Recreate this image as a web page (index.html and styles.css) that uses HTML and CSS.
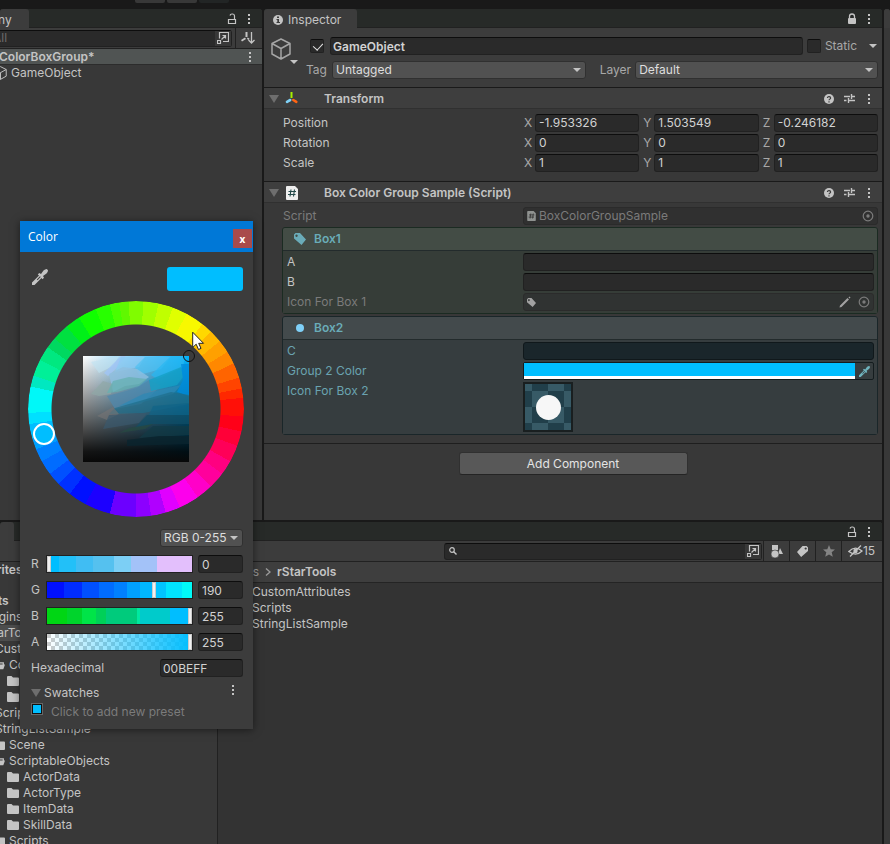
FILE: index.html
```html
<!DOCTYPE html>
<html lang="en">

<head>
  <meta charset="UTF-8" />
  <meta name="viewport" content="width=device-width, initial-scale=1.0" />
  <title>Inspector</title>
  <link rel="stylesheet" href="styles.css">
</head>

<body>
  <svg class="sprite" aria-hidden="true">
    <symbol id="kebab" viewBox="0 0 4 12">
      <path d="M1 1h2v2H1zM1 5h2v2H1zM1 9h2v2H1z" fill="currentColor" />
    </symbol>
    <symbol id="unlock" viewBox="0 0 10 12">
      <path d="M1.5 6.5h7v4h-7zM7.5 6V3a2 2 0 0 0-2-2H5a2 2 0 0 0-2 1.5" fill="none" stroke="currentColor" stroke-width="1.2" />
    </symbol>
    <symbol id="lock" viewBox="0 0 10 12">
      <path d="M2.5 6V3.5a2.5 2.5 0 0 1 5 0V6" fill="none" stroke="currentColor" stroke-width="1.3" />
      <rect x="1" y="5" width="8" height="6" rx="1" fill="currentColor" />
    </symbol>
    <symbol id="popout" viewBox="0 0 12 12">
      <path d="M2.5 6.5V.5h9v9H6M.5 8.5h3v3h-3zM4.5 7.5l4-4M5.500 3.500h3v3" fill="none" stroke="currentColor" stroke-width="1.2" />
    </symbol>
    <symbol id="cube" viewBox="0 0 20 22">
      <path d="M10 1l9 4.500v10.500L10 21 1 16V5.500zM1 5.500l9 5 9-5M10 10.500V21" fill="none" stroke="currentColor" stroke-width="1.500" stroke-linejoin="round" />
    </symbol>
    <symbol id="folder" viewBox="0 0 12 10">
      <path d="M0 1a1 1 0 0 1 1-1h3.500l1.500 1.500h5a1 1 0 0 1 1 1V9a1 1 0 0 1-1 1H1a1 1 0 0 1-1-1z" fill="currentColor" />
    </symbol>
    <symbol id="folder-open" viewBox="0 0 14 10">
      <path d="M1 9V1h4l1.500 1.500H12V5" fill="none" stroke="currentColor" stroke-width="1.500" />
      <path d="M3.500 4.500H14L12 10H1z" fill="currentColor" />
    </symbol>
    <symbol id="help" viewBox="0 0 10 10">
      <circle cx="5" cy="5" r="5" fill="currentColor" />
      <path d="M3.400 4a1.600 1.400 0 1 1 2.300 1.200Q5 5.500 5 6.300M5 7.200v1.200" fill="none" stroke="#3e3e3e" stroke-width="1.200" />
    </symbol>
    <symbol id="preset" viewBox="0 0 11 11">
      <path d="M0 3.500h6M8 3.500h3M7.500 1v5M0 7.500h2.500M4.500 7.500H11M4.500 5v5" fill="none" stroke="currentColor" stroke-width="1.400" />
    </symbol>
    <symbol id="tag" viewBox="0 0 12 12">
      <path fill-rule="evenodd" d="M0 1.500L1.500 0H6l6 6.500L7.500 12 0 5.500zM2.500 1.500a1.200 1.200 0 1 0 .1 0z" fill="currentColor" />
    </symbol>
    <symbol id="target" viewBox="0 0 12 12">
      <circle cx="6" cy="6" r="4.800" fill="none" stroke="currentColor" stroke-width="1.200" />
      <circle cx="6" cy="6" r="1.700" fill="currentColor" />
    </symbol>
    <symbol id="pencil" viewBox="0 0 12 12">
      <path d="M.5 11.500l.5-2L8.500 2l1.500 1.500L2.500 11zM9.500 1.500l1-1 1 1-1 1z" fill="currentColor" />
    </symbol>
    <symbol id="dropper" viewBox="0 0 16 16">
      <path fill-rule="evenodd" d="M0 16v-2.500L7 6.500 5.800 5.500 7.200 4l1.800 1 2.500-3.500Q13 0 14.800 0L16 1.200Q16 3 14.500 4.500L11 7l1 1.800L10.500 10.200 9.500 9 2.500 16zM5.500 11.200L8.700 8 8 7.300 4.800 10.500z" fill="currentColor" />
    </symbol>
    <symbol id="script" viewBox="0 0 12 14">
      <path d="M0 1a1 1 0 0 1 1-1h8l3 3v10a1 1 0 0 1-1 1H1a1 1 0 0 1-1-1z" fill="currentColor" />
      <path d="M5 3.500l-1 7M8.500 3.500l-1 7M2.500 5.500h7.500M2 8.500h7.500" stroke="var(--hash)" stroke-width="1.100" />
    </symbol>
  </svg>

  <div class="topbar"><span></span><span></span><span></span></div>

  <main class="editor">
    <section class="panel hierarchy">
      <div class="tabbar">
        <div class="tab">ny</div>
        <div class="tab-tools">
          <svg class="i-lock"><use href="#unlock" /></svg>
          <svg class="i-kebab"><use href="#kebab" /></svg>
        </div>
      </div>
      <div class="toolbar">
        <div class="search">
          <input type="text" placeholder="All" aria-label="Search hierarchy" />
          <button class="search-open" aria-label="Open search"><svg class="i12"><use href="#popout" /></svg></button>
        </div>
        <button class="tool sort" aria-label="Sort">
          <svg width="14" height="12" viewBox="0 0 14 12">
            <path d="M10.500 0v11M7.500 8l3 3 3-3" fill="none" stroke="currentColor" stroke-width="1.300" />
            <path d="M4.500 0h2v5h-2zM0 8l4-2.500 1 1.500-4 2.500zM6.500 5.500l2 1-.7 1.500L6 7z" fill="currentColor" />
          </svg>
        </button>
      </div>
      <div class="scene-row"><b>ColorBoxGroup*</b><svg class="i-kebab"><use href="#kebab" /></svg></div>
      <div class="object-row"><svg class="i-cube-s"><use href="#cube" /></svg>GameObject</div>
    </section>

    <section class="panel inspector">
      <div class="tabbar">
        <div class="tab">
          <svg width="10" height="10" viewBox="0 0 10 10">
            <circle cx="5" cy="5" r="5" fill="currentColor" />
            <path d="M4 1.500h2v1.500H4zM3.500 4H6v3h1v1H3.500V7h.8V5h-.8z" fill="#3c3c3c" />
          </svg>
          Inspector
        </div>
        <div class="tab-tools">
          <svg class="i-lock"><use href="#lock" /></svg>
          <svg class="i-kebab"><use href="#kebab" /></svg>
        </div>
      </div>

      <div class="object-header">
        <div class="object-icon">
          <svg class="i-cube"><use href="#cube" /></svg>
          <i class="arrow"></i>
        </div>
        <div class="object-fields">
          <div class="object-line">
            <input type="checkbox" checked aria-label="Active" />
            <input class="field name" type="text" value="GameObject" aria-label="Name" />
            <input type="checkbox" id="static" />
            <label for="static">Static</label>
            <i class="arrow static-arrow"></i>
          </div>
          <div class="object-line">
            <label class="tag-label" for="tag-select">Tag</label>
            <span class="dropdown tag-drop"><select id="tag-select"><option>Untagged</option></select></span>
            <label class="layer-label" for="layer-select">Layer</label>
            <span class="dropdown layer-drop"><select id="layer-select"><option>Default</option></select></span>
          </div>
        </div>
      </div>

      <div class="component-header">
        <i class="fold"></i>
        <svg class="component-icon" width="14" height="14" viewBox="0 0 14 14">
          <path d="M5.500 0h2v6h-2z" fill="#a5f000" />
          <path d="M5.200 8L2 9.800" stroke="#7fd0f5" stroke-width="2.600" stroke-linecap="round" />
          <path d="M8.300 8l3 1.800" stroke="#ff6413" stroke-width="2.600" stroke-linecap="round" />
        </svg>
        <h2>Transform</h2>
        <div class="component-tools">
          <svg class="i-help"><use href="#help" /></svg>
          <svg class="i-preset"><use href="#preset" /></svg>
          <svg class="i-kebab"><use href="#kebab" /></svg>
        </div>
      </div>
      <div class="rows transform">
        <div class="row">
          <span>Position</span>
          <div class="vector">
            <label>X<input class="field" type="text" value="-1.953326" /></label>
            <label>Y<input class="field" type="text" value="1.503549" /></label>
            <label>Z<input class="field" type="text" value="-0.246182" /></label>
          </div>
        </div>
        <div class="row">
          <span>Rotation</span>
          <div class="vector">
            <label>X<input class="field" type="text" value="0" /></label>
            <label>Y<input class="field" type="text" value="0" /></label>
            <label>Z<input class="field" type="text" value="0" /></label>
          </div>
        </div>
        <div class="row">
          <span>Scale</span>
          <div class="vector">
            <label>X<input class="field" type="text" value="1" /></label>
            <label>Y<input class="field" type="text" value="1" /></label>
            <label>Z<input class="field" type="text" value="1" /></label>
          </div>
        </div>
      </div>

      <div class="component-header">
        <i class="fold"></i>
        <svg class="component-icon script-icon" width="12" height="14"><use href="#script" /></svg>
        <h2>Box Color Group Sample (Script)</h2>
        <div class="component-tools">
          <svg class="i-help"><use href="#help" /></svg>
          <svg class="i-preset"><use href="#preset" /></svg>
          <svg class="i-kebab"><use href="#kebab" /></svg>
        </div>
      </div>
      <div class="rows script">
        <div class="row disabled">
          <span>Script</span>
          <div class="object-field">
            <svg class="i-script"><use href="#script" /></svg>
            <span>BoxColorGroupSample</span>
            <svg class="i12 pick"><use href="#target" /></svg>
          </div>
        </div>

        <div class="box box-green">
          <h3><svg class="i12"><use href="#tag" /></svg>Box1</h3>
          <div class="box-body">
            <div class="row"><label for="a">A</label><input class="field" id="a" type="text" /></div>
            <div class="row"><label for="b">B</label><input class="field" id="b" type="text" /></div>
            <div class="row disabled">
              <span>Icon For Box 1</span>
              <div class="object-field">
                <svg class="i-tag-s"><use href="#tag" /></svg>
                <svg class="i12 pick edit"><use href="#pencil" /></svg>
                <svg class="i12"><use href="#target" /></svg>
              </div>
            </div>
          </div>
        </div>

        <div class="box box-blue">
          <h3><i class="dot"></i>Box2</h3>
          <div class="box-body">
            <div class="row"><label for="c">C</label><input class="field" id="c" type="text" /></div>
            <div class="row">
              <label for="group-color">Group 2 Color</label>
              <div class="color-field">
                <input id="group-color" type="color" value="#00beff" />
                <button aria-label="Pick color"><svg width="11" height="11"><use href="#dropper" /></svg></button>
              </div>
            </div>
            <div class="row"><span>Icon For Box 2</span><div class="preview"><i></i></div></div>
          </div>
        </div>
      </div>

      <div class="add-row"><button class="add">Add Component</button></div>
    </section>

    <section class="panel project">
      <div class="tabbar">
        <div class="tab"></div>
        <div class="tab-tools">
          <svg class="i-lock"><use href="#unlock" /></svg>
          <svg class="i-kebab"><use href="#kebab" /></svg>
        </div>
      </div>
      <div class="toolbar">
        <div class="search">
          <svg class="lens" width="8" height="8" viewBox="0 0 8 8"><circle cx="3" cy="3" r="2.300" fill="none" stroke="currentColor" stroke-width="1.200" /><path d="M4.700 4.700L7.500 7.500" stroke="currentColor" stroke-width="1.400" /></svg>
          <input type="text" aria-label="Search project" />
          <button class="search-open" aria-label="Open search"><svg class="i12"><use href="#popout" /></svg></button>
        </div>
        <button class="tool" aria-label="Search by type">
          <svg width="12" height="13" viewBox="0 0 12 13"><path d="M1 0h6v5H1zM9 3l3 6H7z" fill="currentColor" /><circle cx="4" cy="9" r="4" fill="currentColor" stroke="#3c3c3c" stroke-width=".6" /></svg>
        </button>
        <button class="tool" aria-label="Search by label"><svg class="i-label"><use href="#tag" /></svg></button>
        <button class="tool dim" aria-label="Favorite">
          <svg width="12" height="12" viewBox="0 0 12 12"><path d="M6 0l1.700 4.200 4.300.3-3.300 2.800 1.100 4.500L6 9.400l-3.800 2.400 1.100-4.500L0 4.500l4.300-.3z" fill="currentColor" /></svg>
        </button>
        <button class="tool hidden-count">
          <svg width="15" height="12" viewBox="0 0 15 12"><path d="M.8 6.500Q7 0 14 6Q8 12 .8 6.500z" fill="none" stroke="currentColor" stroke-width="1.300" /><circle cx="7.500" cy="6" r="2.200" fill="currentColor" /><path d="M2 11.500L13 .5" stroke="currentColor" stroke-width="1.300" /></svg>15
        </button>
      </div>
      <div class="project-body">
        <div class="tree">
          <ul>
            <li class="l0 favorites"><i></i><b>Favorites</b></li>
            <li class="l0"><i></i><b>Assets</b></li>
            <li class="l1"><svg><use href="#folder" /></svg>Plugins</li>
            <li class="l1 selected"><svg><use href="#folder" /></svg>rStarTools</li>
            <li class="l2"><svg><use href="#folder" /></svg>CustomAttributes</li>
            <li class="l3"><svg><use href="#folder-open" /></svg>Core</li>
            <li class="l4"><svg><use href="#folder" /></svg></li>
            <li class="l4"><svg><use href="#folder" /></svg></li>
            <li class="l2"><svg><use href="#folder" /></svg>Scripts</li>
            <li class="l2"><svg><use href="#folder" /></svg>StringListSample</li>
            <li class="l3"><svg><use href="#folder" /></svg>Scene</li>
            <li class="l3"><svg><use href="#folder-open" /></svg>ScriptableObjects</li>
            <li class="l4"><svg><use href="#folder" /></svg>ActorData</li>
            <li class="l4"><svg><use href="#folder" /></svg>ActorType</li>
            <li class="l4"><svg><use href="#folder" /></svg>ItemData</li>
            <li class="l4"><svg><use href="#folder" /></svg>SkillData</li>
            <li class="l3"><svg><use href="#folder" /></svg>Scripts</li>
          </ul>
        </div>
        <div class="files">
          <div class="breadcrumb">
            <span>Assets</span>
            <svg width="6" height="8" viewBox="0 0 6 8"><path d="M1 .5L5 4 1 7.500" fill="none" stroke="currentColor" stroke-width="1.400" /></svg>
            <b>rStarTools</b>
          </div>
          <ul>
            <li><svg><use href="#folder" /></svg>CustomAttributes</li>
            <li><svg><use href="#folder" /></svg>Scripts</li>
            <li><svg><use href="#folder" /></svg>StringListSample</li>
          </ul>
        </div>
      </div>
    </section>

    <aside class="panel side"><div class="side-tab"></div></aside>
  </main>

  <div class="picker" role="dialog" aria-label="Color">
    <div class="picker-title">Color<button aria-label="Close">x</button></div>
    <div class="picker-body">
      <div class="picker-top">
        <svg width="16" height="16"><use href="#dropper" /></svg>
        <div class="current"></div>
      </div>
      <div class="wheel">
        <div class="hue"></div>
        <svg class="shade" width="106" height="106" viewBox="0 0 106 106">
          <defs>
            <linearGradient id="sat"><stop offset="0" stop-color="#fff" /><stop offset=".5" stop-color="#80cdf8" /><stop offset="1" stop-color="#00b4ff" /></linearGradient>
            <linearGradient id="val" x2="0" y2="1"><stop offset="0" stop-color="#000" stop-opacity="0" /><stop offset=".9" stop-color="#000" stop-opacity=".92" /><stop offset="1" stop-color="#080808" /></linearGradient>
          </defs>
          <path d="M0 0h106v106H0z" fill="url(#sat)" />
          <path d="M0 0h106v106H0z" fill="url(#val)" />
          <path d="M8 6L36 0l-6 10-14 7z" fill="#bfe3f2" opacity=".6" />
          <path d="M21 17L38 0h5l-9 12-9 8z" fill="#a0c4f5" opacity=".8" />
          <path d="M38 1h24l-6 10-24 5z" fill="#8accf5" opacity=".7" />
          <path d="M62 1h26l-10 12-22 6-4-8z" fill="#4fc0f2" opacity=".7" />
          <path d="M88 0h14l-2 11-26 12-6-4z" fill="#28b8f2" opacity=".7" />
          <path d="M26 18l14-7 14 2 12 8-10 7-14 2-12 6z" fill="#8fbfe0" opacity=".8" />
          <path d="M8 38l12-13 10 3-2 10-12 2z" fill="#90a8a6" opacity=".7" />
          <path d="M24 37l6-12 16-4 18 2-8 7-22 6z" fill="#66b0b2" opacity=".75" />
          <path d="M24 40l30-8 12-8 12 6-20 18-26 5z" fill="#5088ac" opacity=".75" />
          <path d="M66 24l32-13 2 10-6 8-26 6z" fill="#14a0c6" opacity=".8" />
          <path d="M60 38l38-9-8 9-38 10-16 2z" fill="#2d88b4" opacity=".75" />
          <path d="M98 8h8v32l-12-4 6-12z" fill="#008cdc" opacity=".8" />
          <path d="M32 52l56-16 18 3v9L60 57l-34 1z" fill="#206e8a" opacity=".7" />
          <path d="M14 60l16-9 6 7-12 6z" fill="#787474" opacity=".6" />
          <path d="M70 50l36-3v12H66z" fill="#0f6488" opacity=".7" />
          <path d="M64 59h42v9H70l-18 4z" fill="#104e68" opacity=".7" />
          <path d="M26 59l38-2-8 10-36 6z" fill="#3b586c" opacity=".7" />
          <path d="M46 72l24-4-8 5-26 4z" fill="#264a42" opacity=".7" />
          <path d="M70 70h36v9l-50 3z" fill="#123a46" opacity=".7" />
          <path d="M44 84l32-4h30v8l-62 2z" fill="#0a242e" opacity=".8" />
        </svg>
        <i class="hue-handle"></i>
        <i class="shade-handle"></i>
        <svg class="cursor" width="13" height="20" viewBox="0 0 13 20"><path d="M.7 1.200v15.300l3.500-3.300 2.300 5.300 2.500-1.100-2.300-5.100h4.800z" fill="#fff" stroke="#222" /></svg>
      </div>
      <span class="dropdown mode"><select aria-label="Color mode"><option>RGB 0-255</option></select></span>
      <div class="channel">
        <label for="r">R</label><input class="slider r" id="r" type="range" min="0" max="255" value="0" />
        <input class="field" type="text" value="0" aria-label="Red" />
      </div>
      <div class="channel">
        <label for="g">G</label><input class="slider g" id="g" type="range" min="0" max="255" value="190" />
        <input class="field" type="text" value="190" aria-label="Green" />
      </div>
      <div class="channel">
        <label for="bl">B</label><input class="slider b" id="bl" type="range" min="0" max="255" value="255" />
        <input class="field" type="text" value="255" aria-label="Blue" />
      </div>
      <div class="channel">
        <label for="al">A</label><input class="slider a" id="al" type="range" min="0" max="255" value="255" />
        <input class="field" type="text" value="255" aria-label="Alpha" />
      </div>
      <div class="hex"><label for="hex">Hexadecimal</label><input class="field" id="hex" type="text" value="00BEFF" /></div>
      <div class="swatches"><i class="fold"></i><span>Swatches</span><svg class="i-kebab"><use href="#kebab" /></svg></div>
      <div class="presets"><button class="preset" aria-label="Add preset"></button><span>Click to add new preset</span></div>
    </div>
  </div>
</body>

</html>
```
FILE: styles.css
```css
* {
  margin: 0;
  padding: 0;
  box-sizing: border-box;
}

body {
  height: 100vh;
  display: flex;
  flex-direction: column;
  background: #191919;
  color: #c4c4c4;
  font: 12px/16px Inter, "Liberation Sans", sans-serif;
  overflow: hidden;
  position: relative;
}

input,
select,
button {
  font: inherit;
  color: inherit;
  border: none;
  background: none;
  border-radius: 0;
  outline: none;
  min-width: 0;
}

svg {
  flex: none;
  display: block;
}

b,
h2,
h3 {
  font-size: 12px;
  font-weight: 600;
}

ul {
  list-style: none;
}

.sprite {
  position: absolute;
  width: 0;
  height: 0;
}

.i12 {
  width: 12px;
  height: 12px;
}

.i-kebab {
  width: 4px;
  height: 12px;
}

.i-lock {
  width: 10px;
  height: 12px;
}

.i-help {
  width: 10px;
  height: 10px;
}

.i-preset {
  width: 11px;
  height: 11px;
}

.arrow {
  flex: none;
  border: 4px solid transparent;
  border-top-color: #c4c4c4;
  border-bottom: none;
}

.fold {
  flex: none;
  border: 5px solid transparent;
  border-top: 8px solid #6e6e6e;
  border-bottom: none;
}

/* window frame */

.topbar {
  height: 9px;
  flex: none;
  display: flex;
  gap: 2px;
  padding-left: 135px;
}

.topbar span {
  width: 30px;
  height: 3px;
  background: #383838;
  border-radius: 0 0 2px 2px;
}

.topbar span:last-child {
  background: #222525;
}

.editor {
  flex: 1;
  min-height: 0;
  display: grid;
  grid-template: 511px minmax(0, 1fr) / 262px minmax(0, 1fr) 6px;
  gap: 2px;
}

.panel {
  background: #383838;
  border-radius: 3px 3px 0 0;
  overflow: hidden;
  min-width: 0;
}

.project {
  grid-column: 1 / 3;
  grid-row: 2;
  display: flex;
  flex-direction: column;
}

.side {
  grid-column: 3;
  grid-row: 1 / 3;
}

.side-tab {
  height: 19px;
  background: #3c3c3c;
}

.tabbar {
  height: 19px;
  flex: none;
  display: flex;
  justify-content: space-between;
  background: #272a28;
  box-shadow: inset 0 -1px #212121;
}

.tab {
  display: flex;
  align-items: center;
  gap: 5px;
  padding: 3px 16px 0 9px;
  background: #3c3c3c;
  border-radius: 3px 3px 0 0;
}

.hierarchy .tab {
  margin-left: -2px;
  padding: 3px 17px 0 0;
  border-radius: 0 3px 0 0;
}

.project .tab {
  width: 14px;
  padding: 0;
}

.tab-tools {
  display: flex;
  align-items: center;
  gap: 10px;
  padding-right: 11px;
}

.toolbar {
  height: 21px;
  flex: none;
  display: flex;
  align-items: center;
  background: #3c3c3c;
  border-bottom: 1px solid #212121;
}

.search {
  flex: 1;
  height: 17px;
  display: flex;
  align-items: center;
  background: #2a2a2a;
  border: 1px solid #212121;
  border-top-color: #0d0d0d;
  border-radius: 3px;
}

.search input {
  flex: 1;
}

.search input::placeholder {
  color: #6c6c6c;
}

.search-open {
  align-self: stretch;
  padding: 0 2px;
  background: #383838;
  border-left: 1px solid #2a2a2a;
}

.hierarchy .search {
  border-left: none;
  border-radius: 0 3px 3px 0;
  margin-right: 3px;
}

.hierarchy .search input {
  text-indent: -7px;
}

.tool {
  width: 26px;
  align-self: stretch;
  display: flex;
  align-items: center;
  justify-content: center;
  border-left: 1px solid #212121;
}

.sort {
  width: 27px;
  padding-right: 3px;
}

.scene-row {
  height: 16px;
  display: flex;
  align-items: center;
  justify-content: space-between;
  margin-left: -1px;
  padding-right: 10px;
  background: #505453;
  border-bottom: 1px solid #2c2c2c;
}

.object-row {
  display: flex;
  align-items: center;
  gap: 4px;
  margin-left: -6px;
}

.i-cube-s {
  width: 13px;
  height: 14px;
}

/* inspector */

.object-header {
  display: flex;
  gap: 11px;
  height: 59px;
  padding: 9px 4px 0 7px;
  background: #3c3c3c;
}

.object-icon {
  padding-top: 1px;
  width: 28px;
  color: #a5a5a5;
}

.object-icon .arrow {
  display: block;
  width: 8px;
  margin-left: 19px;
}

.i-cube {
  width: 20px;
  height: 22px;
}

.object-fields {
  flex: 1;
  min-width: 0;
  display: flex;
  flex-direction: column;
  gap: 6px;
}

.object-line {
  display: flex;
  align-items: center;
  height: 18px;
}

input[type="checkbox"] {
  appearance: none;
  flex: none;
  width: 14px;
  height: 14px;
  background: #2a2a2a;
  border: 1px solid #212121;
  border-top-color: #0d0d0d;
  border-radius: 2px;
}

input[type="checkbox"]:checked::after {
  content: "";
  display: block;
  width: 5px;
  height: 8px;
  margin: 1px 4px;
  border: solid #e4e4e4;
  border-width: 0 1px 1px 0;
  transform: rotate(42deg);
}

.field {
  height: 18px;
  padding: 0 3px;
  background: #2a2a2a;
  border: 1px solid #212121;
  border-top-color: #0d0d0d;
  border-radius: 3px;
  color: #d2d2d2;
}

.name {
  flex: 1;
  margin: 0 4px 0 6px;
  padding: 0 2px;
  font-weight: 600;
}

.object-line label {
  color: #a8a8a8;
}

#static + label {
  margin-left: 4px;
}

.static-arrow {
  margin: 0 1px 0 12px;
}

.object-line .tag-label {
  margin: 0 5px 0 -4px;
}

.object-line .layer-label {
  margin: 0 4px 0 14px;
}

.tag-drop {
  flex: 253;
}

.layer-drop {
  flex: 242;
}

.dropdown {
  position: relative;
  height: 18px;
  background: #515151;
  border: 1px solid #303030;
  border-radius: 3px;
}

.dropdown select {
  display: block;
  width: 100%;
  height: 16px;
  appearance: none;
  padding: 0 3px;
  color: #dedede;
}

.dropdown::after {
  content: "";
  position: absolute;
  right: 4px;
  top: 6px;
  border: 4px solid transparent;
  border-top-color: #c4c4c4;
  border-bottom: none;
}

.component-header {
  height: 22px;
  display: flex;
  align-items: center;
  padding: 1px 11px 0 5px;
  background: #3e3e3e;
  border-top: 1px solid #1a1a1a;
  border-bottom: 1px solid #303030;
}

.component-icon {
  margin: 0 25px 0 6px;
}

.script-icon {
  margin-right: 26px;
  margin-left: 7px;
  color: #eee;
  --hash: #244a4a;
}

.component-tools {
  display: flex;
  align-items: center;
  gap: 10px;
  margin-left: auto;
}

.component-tools .i-kebab {
  margin-left: 2px;
}

.rows {
  padding: 4px 4px 8px 19px;
}

.transform {
  display: grid;
  gap: 2px;
  padding: 5px 4px 9px 19px;
}

.row {
  display: grid;
  grid-template-columns: 240px minmax(0, 1fr);
  line-height: 18px;
}

.transform .row {
  grid-template-columns: 241px minmax(0, 1fr);
}

.vector {
  display: grid;
  grid-template-columns: repeat(3, minmax(0, 1fr));
  gap: 4px;
}

.vector label {
  display: grid;
  grid-template-columns: 11px minmax(0, 1fr);
  color: #a8a8a8;
}

.disabled {
  color: #7b7b7b;
}

.object-field {
  height: 18px;
  display: flex;
  align-items: center;
  gap: 3px;
  padding: 0 3px;
  background: #303030;
  border: 1px solid #2b2b2b;
  border-radius: 3px;
}

.pick {
  margin-left: auto;
}

.edit {
  color: #a2a2a2;
}

.object-field .pick + svg {
  margin-left: 4px;
}

.i-script {
  width: 9px;
  height: 10px;
  color: #8f9290;
  --hash: #303030;
}

.i-tag-s {
  width: 9px;
  height: 9px;
  color: #a2a2a2;
}

.box {
  margin: 2px 0 0 -1px;
  border: 1px solid #1a2629;
  border-radius: 3px;
}

.box h3 {
  height: 23px;
  display: flex;
  align-items: center;
  gap: 8px;
  padding-left: 11px;
  color: #6aacb8;
  background: #434a4c;
  border-bottom: 1px solid #232b2c;
  border-radius: 2px 2px 0 0;
}

.box-body {
  display: grid;
  gap: 2px;
  padding: 2px 3px 2px 4px;
  background: #363d3f;
}

.box .row {
  grid-template-columns: 236px minmax(0, 1fr);
}

.box-green {
  border-color: #1b2b22;
}

.box-green h3 {
  background: #434c45;
}

.box-green .box-body {
  background: #363d38;
}

.box-green .object-field {
  background: #303332;
}

.box-blue .box-body {
  color: #6aa3b0;
}

.box-blue .field {
  background: #1a262b;
  border-color: #10181b;
}

.dot {
  width: 8px;
  height: 8px;
  margin: 0 2px;
  border-radius: 50%;
  background: #7fd0f8;
}

.color-field {
  height: 18px;
  display: flex;
  border: 1px solid #141c1e;
  border-radius: 2px;
}

.color-field input {
  appearance: none;
  flex: 1;
  height: 16px;
  background: #fff;
  padding-bottom: 3px;
}

.color-field input::-webkit-color-swatch-wrapper {
  padding: 0;
}

.color-field input::-webkit-color-swatch {
  border: none;
  border-radius: 0;
}

.color-field button {
  width: 18px;
  display: grid;
  place-items: center;
  color: #6fb3bd;
}

.preview {
  width: 50px;
  height: 50px;
  display: grid;
  place-items: center;
  border: 2px solid #191f20;
  background: repeating-conic-gradient(#213f4a 0 25%, #375a66 0 50%) -9px -9px / 32px 32px;
}

.preview i {
  width: 25px;
  height: 25px;
  border-radius: 50%;
  background: #f7f7f7;
}

.add-row {
  display: flex;
  justify-content: center;
  padding-top: 8px;
  border-top: 1px solid #1e1e1e;
}

.add {
  width: 229px;
  height: 23px;
  background: #585858;
  border: 1px solid #303030;
  border-bottom-color: #242424;
  border-radius: 3px;
  color: #e4e4e4;
}

/* project */

.project .search {
  margin: 0 1px 0 444px;
  padding-left: 4px;
}

.lens {
  margin-right: 4px;
}

.i-label {
  width: 11px;
  height: 11px;
  transform: scaleX(-1);
}

.dim {
  color: #848484;
}

.hidden-count {
  width: 41px;
  padding-right: 1px;
}

.project-body {
  flex: 1;
  min-height: 0;
  display: grid;
  grid-template-columns: 218px minmax(0, 1fr);
}

.tree {
  overflow: hidden;
  border-right: 1px solid #212121;
}

/* the tree is scrolled sideways past its first levels */
.tree ul {
  margin-left: -49px;
}

.tree li,
.files li {
  height: 16px;
  display: flex;
  align-items: center;
  gap: 4px;
}

.tree i,
.tree svg,
.files li svg {
  flex: none;
  width: 12px;
  height: 10px;
}

.tree .favorites {
  margin-bottom: 15px;
}

.tree .selected {
  background: #4d4d4d;
}

.l0 {
  padding-left: 2px;
}

.l1 {
  padding-left: 14px;
}

.l2 {
  padding-left: 28px;
}

.l3 {
  padding-left: 42px;
}

.l4 {
  padding-left: 56px;
}

.files {
  background: #333;
}

.breadcrumb {
  height: 21px;
  display: flex;
  align-items: center;
  gap: 6px;
  padding-left: 3px;
  background: #3e3e3e;
  border-bottom: 1px solid #242424;
}

.breadcrumb span,
.breadcrumb svg {
  color: #999;
}

.files ul {
  padding: 1px 0 0 18px;
}

/* color picker window */

.picker {
  position: absolute;
  left: 20px;
  top: 221px;
  width: 233px;
  background: #3c3c3c;
  box-shadow: 0 1px 8px rgba(0, 0, 0, 0.5);
}

.picker-title {
  height: 31px;
  display: flex;
  align-items: center;
  justify-content: space-between;
  padding: 0 1px 0 8px;
  background: #0078d7;
  color: #fff;
  font-family: "Open Sans", "Noto Sans", sans-serif;
}

.picker-title button {
  width: 19px;
  height: 19px;
  margin-top: 4px;
  background: #a94b4b;
  font-size: 10px;
  font-weight: 700;
  line-height: 16px;
}

.picker-body {
  display: flex;
  flex-direction: column;
  gap: 8px;
  padding: 15px 10px 9px 8px;
}

.picker-top {
  display: flex;
  justify-content: space-between;
  padding-left: 4px;
}

.picker-top svg {
  margin-top: 2px;
}

.current {
  width: 76px;
  height: 24px;
  background: #00beff;
  border-radius: 3px;
}

.wheel {
  position: relative;
  display: grid;
  place-items: center;
  align-self: flex-start;
  margin: 2px 0 4px;
}

.hue,
.shade {
  grid-area: 1 / 1;
}

.hue {
  width: 216px;
  height: 216px;
  border-radius: 50%;
  background: conic-gradient(#80fc00 0 4deg, #a0ff00 0 12deg, #c0ff00 0 20deg, #e0ff00 0 28deg,
      #f8f800 0 38deg, #ffd800 0 44deg, #ffb800 0 51deg, #ffa000 0 58deg, #ff8800 0 65deg,
      #ff6400 0 73deg, #ff4400 0 79deg, #ff2800 0 84deg, #ff1008 0 94deg, #ff0018 0 102deg,
      #ff0038 0 110deg, #ff0058 0 119deg, #ff0080 0 127deg, #ff009c 0 136deg, #ff00c8 0 145deg,
      #fc00ec 0 156deg, #e000ff 0 164deg, #b000ff 0 172deg, #8c00ff 0 180deg, #6c00ff 0 194deg,
      #1c00ff 0 208deg, #0010ff 0 218deg, #0030ff 0 226deg, #0050ff 0 233deg, #006cff 0 241deg,
      #0080ff 0 248deg, #00a0ff 0 254deg, #00beff 0 262deg, #00e0ff 0 268deg, #00f8f8 0 282deg,
      #00e8c0 0 288deg, #00f098 0 297deg, #00e880 0 305deg, #00d860 0 311deg, #00e040 0 320deg,
      #00f018 0 328deg, #10ff00 0 338deg, #28ff00 0 346deg, #48ff00 0 351deg, #60f800 0 356deg,
      #80fc00 0);
  -webkit-mask: radial-gradient(circle, transparent 84px, #000 85px);
  mask: radial-gradient(circle, transparent 84px, #000 85px);
}

.hue-handle,
.shade-handle {
  position: absolute;
  border-radius: 50%;
}

.hue-handle {
  left: 5px;
  top: 122px;
  width: 22px;
  height: 22px;
  border: 2px solid #fff;
  background: #00beff;
}

.shade-handle {
  left: 155px;
  top: 49px;
  width: 12px;
  height: 12px;
  border: 1px solid #111;
}

.cursor {
  position: absolute;
  left: 164px;
  top: 30px;
}

.mode {
  width: 83px;
  align-self: flex-end;
}

.channel {
  display: grid;
  grid-template-columns: 15px minmax(0, 1fr) 45px;
  align-items: center;
  padding-left: 3px;
}

.slider {
  appearance: none;
  height: 18px;
  margin-right: 5px;
  border: 1px solid #212121;
}

.slider::-webkit-slider-thumb {
  appearance: none;
  width: 4px;
  height: 16px;
  background: #f0f0f0;
  border: 1px solid #ccc;
}

.slider.r {
  background: linear-gradient(to right, #00beff 8%, #22c0f8 0 20%, #40bdf3 0 32%, #55c1ef 0 46%,
      #7ccff5 0 58%, #a3c2f8 0 76%, #e3bffc 0);
}

.slider.g {
  background: linear-gradient(to right, #0010ff 12%, #002cff 0 24%, #0050ff 0 36%, #006cff 0 46%,
      #0080ff 0 55%, #00a0ff 0 64%, #00b8ff 0 73%, #00c4ff 0 82%, #00e4ff 0 93%, #00faf8 0);
}

.slider.b {
  background: linear-gradient(to right, #00d614 14%, #00d42c 0 24%, #00e448 0 34%, #00d058 0 41%,
      #00cb7c 0 62%, #00e8a0 0 64%, #00cbcb 0 85%, #00beff 0);
}

.slider.a {
  background: linear-gradient(to right, transparent, #00beff),
    repeating-conic-gradient(#fff 0 25%, #ccc 0 50%) 0 0 / 8px 8px;
}

.hex {
  display: flex;
  align-items: center;
  justify-content: space-between;
  padding-left: 3px;
}

.hex .field {
  width: 83px;
  padding: 0 2px;
}

.swatches {
  display: flex;
  align-items: center;
  gap: 3px;
  padding-left: 3px;
}

.swatches svg {
  margin: -6px 8px 0 auto;
}

.presets {
  display: flex;
  gap: 8px;
  padding-left: 3px;
  margin-top: -5px;
  color: #7b7b7b;
}

.preset {
  width: 12px;
  height: 12px;
  margin-top: -1px;
  border: 1px solid #666;
  background: #00beff;
  box-shadow: inset 0 0 0 1px #111;
}
```
